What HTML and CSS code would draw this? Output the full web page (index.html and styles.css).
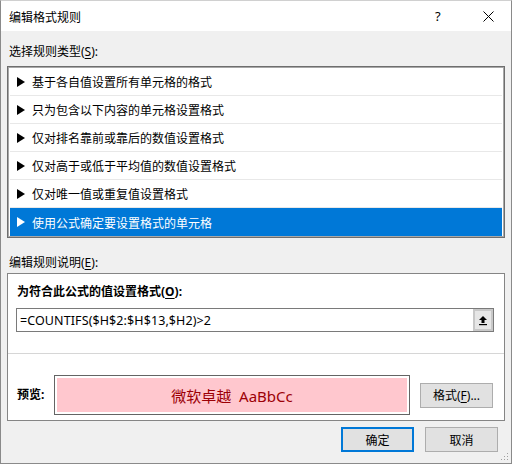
FILE: index.html
```html
<!DOCTYPE html>
<html lang="zh-CN">
<head>
  <meta charset="UTF-8" />
  <title>编辑格式规则</title>
  <link rel="stylesheet" href="styles.css">
</head>
<body>
  <div class="dialog">
    <div class="titlebar">
      <span class="title">编辑格式规则</span>
      <span class="help">?</span>
      <span class="close">
        <svg width="11" height="11" viewBox="0 0 11 11"><path d="M0.5 0.5 L10.5 10.5 M10.5 0.5 L0.5 10.5" stroke="#000" stroke-width="1" fill="none"/></svg>
      </span>
    </div>

    <div class="content">
      <div class="label first">选择规则类型(<u>S</u>):</div>

      <div class="rule-list">
        <div class="rule"><i class="arrow"></i>基于各自值设置所有单元格的格式</div>
        <div class="rule"><i class="arrow"></i>只为包含以下内容的单元格设置格式</div>
        <div class="rule"><i class="arrow"></i>仅对排名靠前或靠后的数值设置格式</div>
        <div class="rule"><i class="arrow"></i>仅对高于或低于平均值的数值设置格式</div>
        <div class="rule"><i class="arrow"></i>仅对唯一值或重复值设置格式</div>
        <div class="rule selected"><i class="arrow"></i>使用公式确定要设置格式的单元格</div>
      </div>

      <div class="label second">编辑规则说明(<u>E</u>):</div>

      <div class="panel">
        <div class="panel-top">
          <div class="bold">为符合此公式的值设置格式(<u>O</u>):</div>
          <div class="formula">
            <span class="formula-text">=COUNTIFS($H$2:$H$13,$H2)&gt;2</span>
            <span class="pick">
              <svg width="10" height="11" viewBox="0 0 10 11"><path d="M5 1 L9 5 L6.5 5 L6.5 8 L3.5 8 L3.5 5 L1 5 Z" fill="#000"/><rect x="1" y="9" width="8" height="1.2" fill="#000"/></svg>
            </span>
          </div>
        </div>
        <div class="preview-row">
          <div class="bold preview-label">预览:</div>
          <div class="preview-box"><div class="preview-fill">微软卓越&nbsp;&nbsp;AaBbCc</div></div>
          <button class="btn format">格式(<u>F</u>)...</button>
        </div>
      </div>

      <div class="actions">
        <button class="btn default">确定</button>
        <button class="btn">取消</button>
      </div>
    </div>

    <svg class="grip" width="8" height="8" viewBox="0 0 8 8">
      <rect x="6" y="0" width="1" height="1" fill="#a0a0a0"/>
      <rect x="3" y="3" width="1" height="1" fill="#a0a0a0"/>
      <rect x="6" y="3" width="1" height="1" fill="#a0a0a0"/>
      <rect x="0" y="6" width="1" height="1" fill="#a0a0a0"/>
      <rect x="3" y="6" width="1" height="1" fill="#a0a0a0"/>
      <rect x="6" y="6" width="1" height="1" fill="#a0a0a0"/>
    </svg>
  </div>
</body>
</html>
```

FILE: styles.css
```css
body {
  margin: 0;
  font-family: "Noto Sans", "Noto Sans CJK SC", sans-serif;
  font-size: 12px;
  color: #000;
  background: #fff;
}

.dialog {
  position: relative;
  width: 512px;
  height: 464px;
  box-sizing: border-box;
  border: 1px solid #8a8a8a;
  border-top-color: #d0d0d0;
  display: flex;
  flex-direction: column;
  background: #f0f0f0;
}

.titlebar {
  height: 30px;
  flex: none;
  display: flex;
  align-items: center;
  background: #fff;
  padding-left: 8px;
}

.title {
  flex: 1;
  font-family: "Noto Sans CJK SC", sans-serif;
}

.help {
  font-size: 13px;
  width: 10px;
  margin-right: 38px;
}

.close {
  display: flex;
  margin-right: 17px;
}

.content {
  flex: 1;
  padding: 0 6px;
  display: flex;
  flex-direction: column;
}

.label {
  line-height: 16px;
  padding-left: 2px;
}

.label.first { margin-top: 13px; }
.label.second { margin-top: 17px; }

u { text-decoration-thickness: 1px; text-underline-offset: 2px; }

.rule-list {
  margin-top: 6px;
  background: #fff;
  border: 1px solid #6e6e6e;
  box-shadow: inset 0 0 0 1px #a8a8a8;
  padding: 1px 2px;
}

.rule {
  height: 28px;
  box-sizing: border-box;
  border-bottom: 1px solid #e8e8e8;
  display: flex;
  align-items: center;
  padding-left: 7px;
  font-family: "Noto Sans CJK SC", sans-serif;
}

.rule .arrow {
  width: 0;
  height: 0;
  border-left: 8px solid #000;
  border-top: 5px solid transparent;
  border-bottom: 5px solid transparent;
  margin-right: 7px;
}

.rule.selected {
  background: #0078d7;
  color: #fff;
  border-bottom: none;
}

.rule.selected .arrow { border-left-color: #fff; }

.panel {
  margin-top: 2px;
  background: #fff;
  border: 1px solid #858585;
}

.panel-top {
  padding: 10px 10px 21px 8px;
  border-bottom: 1px solid #d6d6d6;
}

.bold {
  font-weight: bold;
  line-height: 16px;
  padding-left: 1px;
}

.formula {
  margin-top: 8px;
  height: 24px;
  box-sizing: border-box;
  border: 1px solid #7a7a7a;
  display: flex;
  align-items: center;
}

.formula-text {
  flex: 1;
  padding-left: 3px;
  font-size: 12.5px;
  letter-spacing: 0.1px;
}

.pick {
  width: 20px;
  height: 22px;
  box-sizing: border-box;
  border: 2px solid #c8c8c8;
  background: #e6e6e6;
  display: flex;
  align-items: center;
  justify-content: center;
}

.preview-row {
  display: flex;
  align-items: center;
  padding: 21px 0 5px 8px;
}

.preview-label {
  width: 37px;
}

.preview-box {
  width: 356px;
  height: 40px;
  box-sizing: border-box;
  border: 1px solid #646464;
  padding: 2px;
}

.preview-fill {
  height: 100%;
  background: #ffc7ce;
  color: #9c0006;
  font-size: 15px;
  display: flex;
  align-items: center;
  justify-content: center;
}

.btn {
  width: 73px;
  height: 25px;
  box-sizing: border-box;
  border: 1px solid #adadad;
  background: #e1e1e1;
  font-family: inherit;
  font-size: 12px;
  color: #000;
  padding: 0;
}

.btn.format { margin-left: 10px; }

.btn.default { border: 2px solid #0078d7; }

.actions {
  display: flex;
  justify-content: flex-end;
  gap: 11px;
  margin-top: 6px;
  padding-right: 7px;
}

.grip {
  position: absolute;
  right: 2px;
  bottom: 2px;
}
```
